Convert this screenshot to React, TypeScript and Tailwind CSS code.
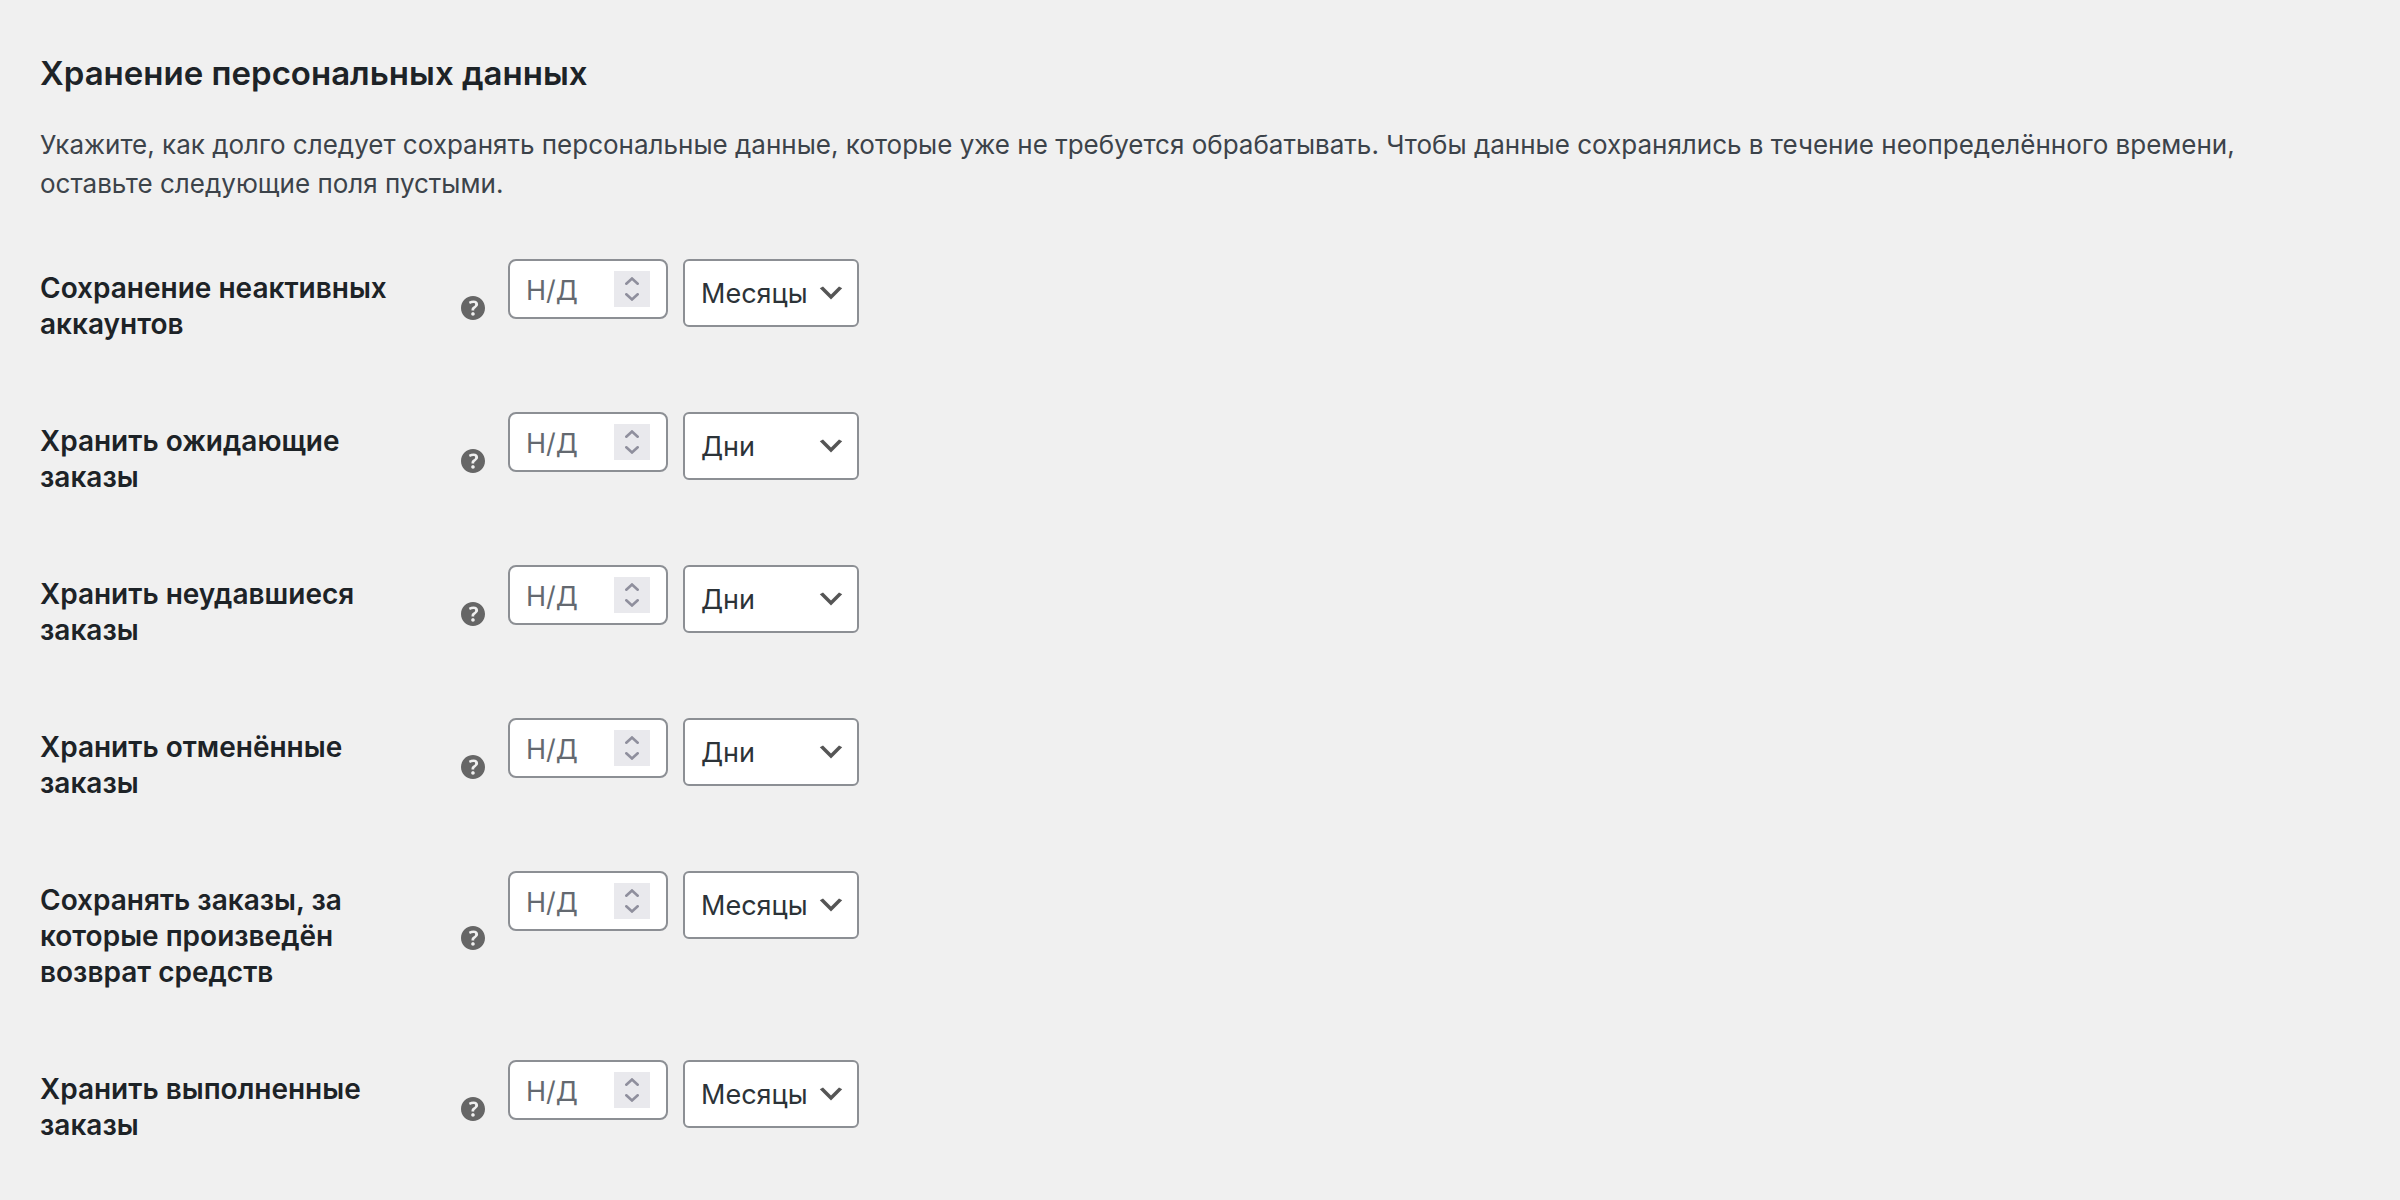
import React, { ReactElement, useState } from 'react'

type Unit = 'days' | 'weeks' | 'months' | 'years'

interface IRetentionField {
  id: string
  label: string
  unit: Unit
}

const fields: IRetentionField[] = [
  { id: 'inactive_accounts', label: 'Сохранение неактивных аккаунтов', unit: 'months' },
  { id: 'pending_orders', label: 'Хранить ожидающие заказы', unit: 'days' },
  { id: 'failed_orders', label: 'Хранить неудавшиеся заказы', unit: 'days' },
  { id: 'cancelled_orders', label: 'Хранить отменённые заказы', unit: 'days' },
  { id: 'refunded_orders', label: 'Сохранять заказы, за которые произведён возврат средств', unit: 'months' },
  { id: 'completed_orders', label: 'Хранить выполненные заказы', unit: 'months' },
]

const HelpTip: React.FC = (): ReactElement => (
  <button type="button" aria-label="Справка" className="mt-1 size-6 shrink-0 text-[#666666]">
    <svg viewBox="3 3 14 14" className="size-6" fill="currentColor" aria-hidden="true">
      <path d="M17 10c0-3.87-3.14-7-7-7-3.87 0-7 3.13-7 7s3.13 7 7 7c3.86 0 7-3.13 7-7zm-6.3 1.48H9.14v-.43c0-.38.08-.7.24-.98s.46-.57.88-.89c.41-.29.68-.53.81-.71.14-.18.2-.39.2-.62 0-.25-.09-.44-.28-.58-.19-.13-.45-.19-.79-.19-.58 0-1.25.19-2 .57l-.64-1.28c.87-.49 1.8-.74 2.77-.74.81 0 1.45.2 1.92.58.48.39.71.91.71 1.55 0 .43-.09.8-.29 1.11-.19.32-.57.67-1.11 1.06-.38.28-.61.49-.71.63-.1.15-.15.34-.15.57v.35zm-1.47 2.74c-.18-.17-.27-.42-.27-.73 0-.33.08-.58.26-.75s.43-.25.77-.25c.32 0 .57.09.75.26s.27.42.27.74c0 .3-.09.55-.27.72-.18.18-.43.27-.75.27-.33 0-.58-.09-.76-.26z" />
    </svg>
  </button>
)

const NumberInput: React.FC<{ id: string }> = ({ id }): ReactElement => {
  const [value, setValue] = useState('')

  const step = (delta: number) =>
    setValue(String(Math.max(1, Number(value) + delta)))

  return (
    <div className="relative h-15 w-40">
      <input
        id={id}
        type="number"
        min={1}
        placeholder="Н/Д"
        value={value}
        onChange={(e) => setValue(e.target.value)}
        className="h-full w-full appearance-none rounded-lg border-2 border-[#8c8f94] bg-white pt-0.5 pr-13 pl-4 text-[27px] text-[#2c3338] [appearance:textfield] placeholder:text-[#646970] [&::-webkit-inner-spin-button]:appearance-none"
      />
      <div className="absolute top-3 right-[18px] flex size-9 flex-col bg-[#e9e9ed] text-[#8f8f9d]">
        <button type="button" aria-label="Увеличить" onClick={() => step(1)} className="flex flex-1 items-end justify-center pb-1">
          <svg width="14" height="8" viewBox="0 0 14 8" fill="none" stroke="currentColor" strokeWidth="2.6" strokeLinecap="round" aria-hidden="true">
            <path d="M1.3 6.7 7 1.5l5.7 5.2" />
          </svg>
        </button>
        <button type="button" aria-label="Уменьшить" onClick={() => step(-1)} className="flex flex-1 items-start justify-center pt-1">
          <svg width="14" height="8" viewBox="0 0 14 8" fill="none" stroke="currentColor" strokeWidth="2.6" strokeLinecap="round" aria-hidden="true">
            <path d="M1.3 1.3 7 6.5l5.7-5.2" />
          </svg>
        </button>
      </div>
    </div>
  )
}

const UnitSelect: React.FC<{ label: string; unit: Unit }> = ({
  label,
  unit,
}): ReactElement => (
  <div className="relative h-17 w-44">
    <select
      aria-label={`${label}: период`}
      defaultValue={unit}
      className="h-full w-full appearance-none rounded-md border-2 border-[#8c8f94] bg-white pt-0.5 pl-4 text-[27px] text-[#2c3338]"
    >
      <option value="days">Дни</option>
      <option value="weeks">Недели</option>
      <option value="months">Месяцы</option>
      <option value="years">Годы</option>
    </select>
    <svg viewBox="0 0 20 20" className="pointer-events-none absolute top-[18px] right-3 size-8" fill="#555555" aria-hidden="true">
      <path d="M5 6l5 5 5-5 2 1-7 7-7-7 2-1z" />
    </svg>
  </div>
)

const RetentionRow: React.FC<IRetentionField> = ({
  id,
  label,
  unit,
}): ReactElement => (
  <div className="flex">
    <div className="flex w-[445px] shrink-0 items-center justify-between pt-[41px] pb-10">
      <label
        htmlFor={id}
        className="w-[396px] text-[28px] leading-9 font-semibold text-[#1d2327]"
      >
        {label}
      </label>
      <HelpTip />
    </div>
    <div className="flex items-start gap-[15px] pt-[30px] pl-[23px]">
      <NumberInput id={id} />
      <UnitSelect label={label} unit={unit} />
    </div>
  </div>
)

const App: React.FC = (): ReactElement => {
  return (
    <main className="min-h-screen overflow-hidden bg-[#f0f0f0] px-10 pt-[51px] font-['Inter',sans-serif]">
      <h2 className="text-[33px] leading-[44px] font-semibold text-[#1d2327]">
        Хранение персональных данных
      </h2>
      <p className="mt-[30px] pr-12 text-[26px] leading-[39px] text-[#3c434a]">
        Укажите, как долго следует сохранять персональные данные, которые уже не
        требуется обрабатывать. Чтобы данные сохранялись в течение
        неопределённого времени, оставьте следующие поля пустыми.
      </p>
      <form className="mt-[26px]">
        {fields.map((field) => (
          <RetentionRow key={field.id} {...field} />
        ))}
      </form>
    </main>
  )
}

export default App
